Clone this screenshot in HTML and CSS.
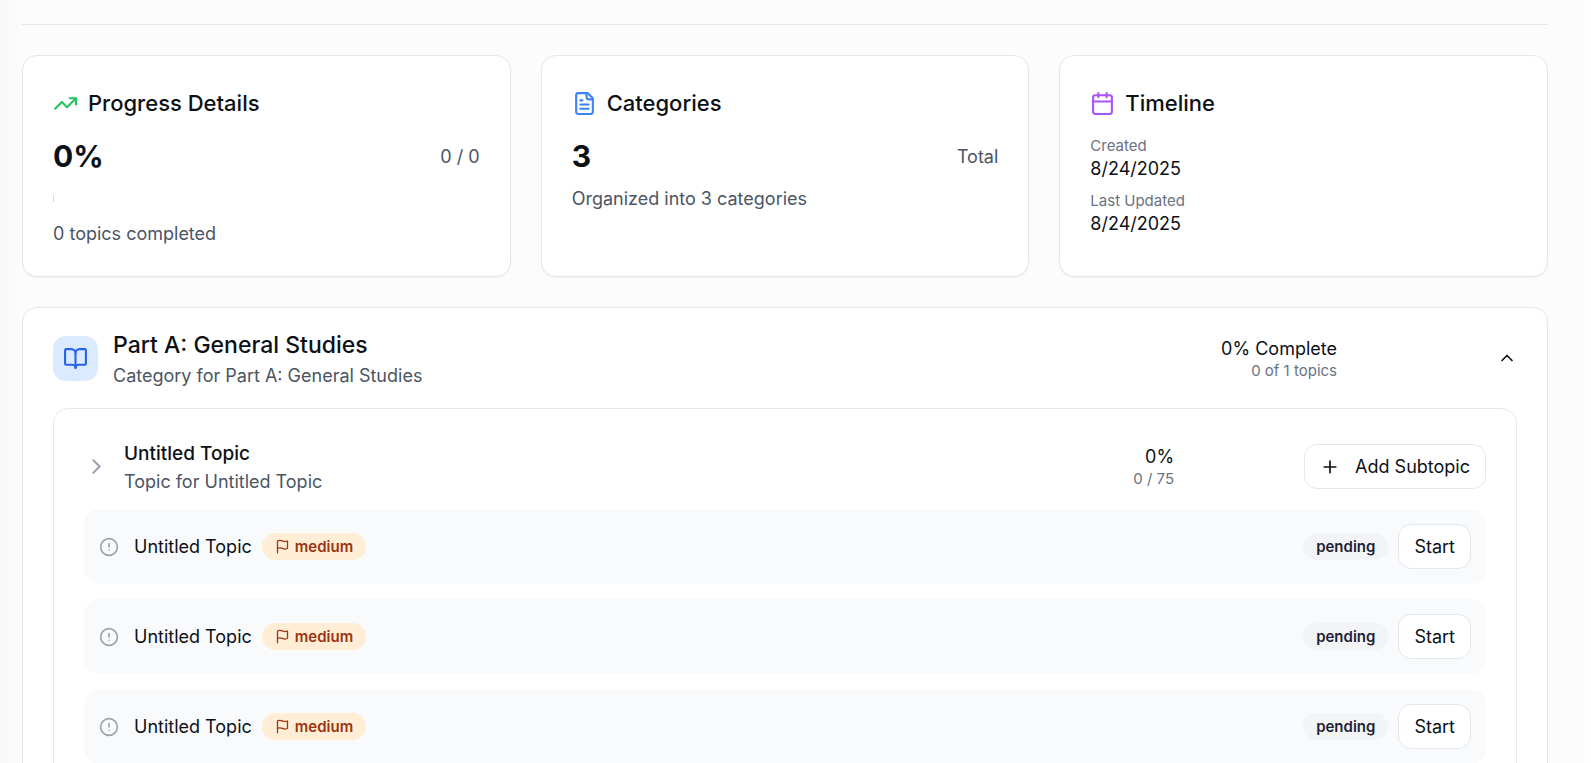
FILE: index.html
```html
<!DOCTYPE html>
<html lang="en">
<head>
<meta charset="utf-8">
<meta name="viewport" content="width=device-width, initial-scale=1">
<title>Syllabus Progress</title>
<link rel="stylesheet" href="styles.css">
</head>
<body>
<svg class="sprite" aria-hidden="true">
  <symbol id="flag" viewBox="0 0 24 24"><path d="M4 15s1-1 4-1 5 2 8 2 4-1 4-1V3s-1 1-4 1-5-2-8-2-4 1-4 1z"/><path d="M4 22v-7"/></symbol>
  <symbol id="alert" viewBox="0 0 24 24"><circle cx="12" cy="12" r="10"/><path d="M12 8v4M12 16h.01"/></symbol>
</svg>
<main class="page">
  <hr class="divider">
  <div class="stats">
    <section class="card">
      <h3 class="card-title">
        <svg class="icon green" viewBox="0 0 24 24"><path d="M22 7l-8.500 8.500-5-5L2 17"/><path d="M16 7h6v6"/></svg>
        Progress Details
      </h3>
      <div class="figure"><span class="number">0%</span><span class="note">0 / 0</span></div>
      <div class="progress"><div class="progress-fill"></div></div>
      <p class="note">0 topics completed</p>
    </section>
    <section class="card">
      <h3 class="card-title">
        <svg class="icon blue" viewBox="0 0 24 24"><path d="M15 2H6a2 2 0 0 0-2 2v16a2 2 0 0 0 2 2h12a2 2 0 0 0 2-2V7Z"/><path d="M14 2v4a2 2 0 0 0 2 2h4M10 9H8M16 13H8M16 17H8"/></svg>
        Categories
      </h3>
      <div class="figure"><span class="number">3</span><span class="note">Total</span></div>
      <p class="note">Organized into 3 categories</p>
    </section>
    <section class="card">
      <h3 class="card-title">
        <svg class="icon purple" viewBox="0 0 24 24"><path d="M8 2v4M16 2v4"/><rect width="18" height="18" x="3" y="4" rx="2"/><path d="M3 10h18"/></svg>
        Timeline
      </h3>
      <dl class="dates">
        <div><dt>Created</dt><dd>8/24/2025</dd></div>
        <div><dt>Last Updated</dt><dd>8/24/2025</dd></div>
      </dl>
    </section>
  </div>

  <section class="category">
    <header class="category-head">
      <span class="badge-icon"><svg class="icon" viewBox="0 0 24 24"><path d="M12 7v14"/><path d="M3 18a1 1 0 0 1-1-1V4a1 1 0 0 1 1-1h5a4 4 0 0 1 4 4 4 4 0 0 1 4-4h5a1 1 0 0 1 1 1v13a1 1 0 0 1-1 1h-6a3 3 0 0 0-3 3 3 3 0 0 0-3-3z"/></svg></span>
      <div class="grow">
        <h2 class="category-title">Part A: General Studies</h2>
        <p class="note">Category for Part A: General Studies</p>
      </div>
      <div class="score"><p class="value">0% Complete</p><p class="small">0 of 1 topics</p></div>
      <div class="track track-wide"></div>
      <button class="toggle" type="button" aria-label="Collapse category"><svg viewBox="0 0 24 24"><path d="M18 15l-6-6-6 6"/></svg></button>
    </header>

    <div class="topic">
      <header class="topic-head">
        <button class="expand" type="button" aria-label="Expand topic"><svg viewBox="0 0 24 24"><path d="M9 18l6-6-6-6"/></svg></button>
        <div class="grow">
          <h3 class="topic-title">Untitled Topic</h3>
          <p class="note">Topic for Untitled Topic</p>
        </div>
        <div class="score"><p class="value">0%</p><p class="small">0 / 75</p></div>
        <div class="track"></div>
        <button class="button add" type="button"><svg viewBox="0 0 24 24"><path d="M5 12h14M12 5v14"/></svg>Add Subtopic</button>
      </header>
      <ul class="subtopics">
        <li class="subtopic">
          <svg class="status" viewBox="0 0 24 24"><use href="#alert"/></svg>
          <span class="name">Untitled Topic</span>
          <span class="pill medium"><svg viewBox="0 0 24 24"><use href="#flag"/></svg>medium</span>
          <span class="pill pending">pending</span>
          <button class="button" type="button">Start</button>
        </li>
        <li class="subtopic">
          <svg class="status" viewBox="0 0 24 24"><use href="#alert"/></svg>
          <span class="name">Untitled Topic</span>
          <span class="pill medium"><svg viewBox="0 0 24 24"><use href="#flag"/></svg>medium</span>
          <span class="pill pending">pending</span>
          <button class="button" type="button">Start</button>
        </li>
        <li class="subtopic">
          <svg class="status" viewBox="0 0 24 24"><use href="#alert"/></svg>
          <span class="name">Untitled Topic</span>
          <span class="pill medium"><svg viewBox="0 0 24 24"><use href="#flag"/></svg>medium</span>
          <span class="pill pending">pending</span>
          <button class="button" type="button">Start</button>
        </li>
      </ul>
    </div>
  </section>
</main>
</body>
</html>
```
FILE: styles.css
```css
* { box-sizing: border-box; margin: 0; padding: 0; }
html { height: 100%; overflow: hidden; }
body {
  height: 100%;
  overflow: hidden;
  border-right: 6px solid #fff;
  background: linear-gradient(to right, #f8f8f8, #fcfcfc 20px);
  color: #0d1117;
  font: 400 18px/25px Inter, "Liberation Sans", sans-serif;
}
svg { fill: none; stroke: currentColor; stroke-width: 2; stroke-linecap: round; stroke-linejoin: round; flex: none; }
button { font: inherit; color: inherit; cursor: pointer; }
.sprite { display: none; }
.page { padding: 24px 37px 0 22px; }
.divider { border: 0; border-top: 1px solid #e2e8f0; margin-bottom: 30px; }
.icon { width: 25px; height: 25px; }
.green { color: #22c55e; }
.blue { color: #3b82f6; }
.purple { color: #a855f7; }

.stats { display: grid; grid-template-columns: repeat(3, 1fr); gap: 30px; margin-bottom: 30px; }
.card, .category { background: #fff; border: 1px solid #e2e8f0; border-radius: 15px; box-shadow: 0 1px 2px rgba(0, 0, 0, 0.05); }
.card { padding: 30px; }
.card-title { display: flex; align-items: center; gap: 10px; margin-bottom: 15px; font-size: 22px; line-height: 35px; font-weight: 500; }
.note { color: #4b5563; }
.figure { display: flex; align-items: center; justify-content: space-between; margin-bottom: 10px; }
.number { font-size: 30px; line-height: 40px; font-weight: 700; }
.progress { display: flex; align-items: center; height: 15px; margin: 15px 0; }
.progress-fill { width: 1px; height: 7px; background: #d4d4fb; }
.dates { display: grid; gap: 10px; }
.dates dt { font-size: 15px; line-height: 20px; color: #6b7280; }
.dates dd { line-height: 25px; }

.category { padding: 20px 30px 30px; }
.category-head { display: flex; align-items: center; gap: 15px; height: 60px; margin-bottom: 20px; }
.badge-icon { display: grid; place-items: center; width: 45px; height: 45px; border-radius: 13px; background: #dbeafe; color: #2563eb; }
.grow { flex: 1; }
.category-title { font-size: 23px; line-height: 35px; font-weight: 500; }
.score { text-align: right; }
.score .value { line-height: 25px; }
.small { font-size: 15px; line-height: 20px; color: #6b7280; }
.track { width: 100px; }
.track-wide { width: 130px; }
.toggle { display: grid; place-items: center; width: 20px; height: 45px; border: 0; background: none; }
.toggle svg { width: 20px; height: 20px; }

.topic { border: 1px solid #e5e7eb; border-radius: 15px; padding: 30px; }
.topic-head { display: flex; align-items: center; gap: 15px; height: 55px; margin-bottom: 15px; }
.expand { display: grid; place-items: center; width: 25px; height: 25px; border: 0; background: none; color: #9ca3af; }
.expand svg { width: 25px; height: 25px; }
.topic-title { font-size: 19px; line-height: 30px; font-weight: 500; }
.button { display: inline-flex; align-items: center; justify-content: center; height: 45px; padding: 0 15px; border: 1px solid #e2e8f0; border-radius: 13px; background: #fff; }
.add { gap: 15px; }
.add svg { width: 20px; height: 20px; }
.subtopics { display: grid; gap: 15px; list-style: none; }
.subtopic { display: flex; align-items: center; gap: 10px; padding: 15px; border-radius: 15px; background: #f9fafb; }
.status { width: 20px; height: 20px; color: #9ca3af; }
.name { margin-left: 5px; }
.pill { display: inline-flex; align-items: center; gap: 5px; height: 27px; padding: 0 13px; border-radius: 14px; font-size: 15px; font-weight: 600; }
.medium { background: #ffedd5; color: #9a3412; }
.medium svg { width: 15px; height: 15px; }
.pending { margin-left: auto; background: #f3f4f6; color: #1f1f35; }
```
